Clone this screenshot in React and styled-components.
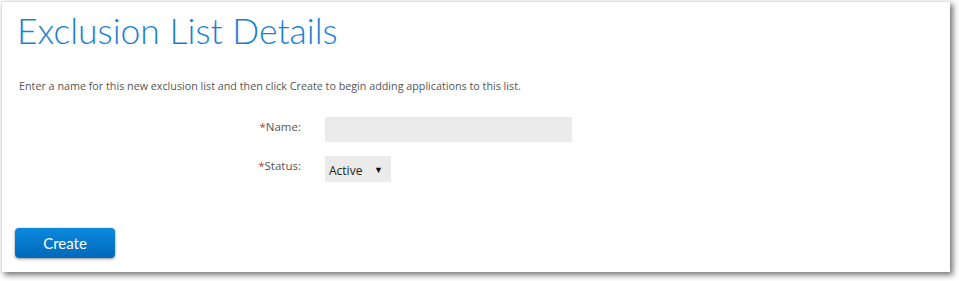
import React from "react";
import styled, { createGlobalStyle } from "styled-components";

const GlobalStyle = createGlobalStyle`
  html, body {
    margin: 0;
    padding: 0;
    background: #ffffff;
  }
  body {
    width: 959px;
    height: 281px;
    overflow: hidden;
  }
`;

const Frame = styled.div`
  padding: 1px 0 0 1px;
  width: 959px;
  height: 281px;
  box-sizing: border-box;
`;

const Panel = styled.div`
  width: 949px;
  height: 271px;
  box-sizing: border-box;
  background: #fff;
  border-top: 1px solid #e2e2e2;
  border-left: 1px solid #e2e2e2;
  box-shadow: 3px 3px 6px rgba(0, 0, 0, 0.55);
  padding: 6px 0 0 15px;
  display: flex;
  flex-direction: column;
`;

const Title = styled.h1`
  margin: 0;
  font-family: Lato, "Liberation Sans", sans-serif;
  font-weight: 300;
  font-size: 35.5px;
  line-height: 46px;
  color: #1a7fd2;
`;

const Intro = styled.p`
  margin: 24px 0 0 2px;
  font-family: "Open Sans", "Liberation Sans", sans-serif;
  font-size: 10.75px;
  line-height: 16px;
  color: #555;
`;

const Form = styled.div`
  margin: 23px 0 0 0;
  display: grid;
  grid-template-columns: 284px 248px;
  column-gap: 24px;
  row-gap: 14px;
  align-items: start;
`;

const Label = styled.label`
  text-align: right;
  font-family: "Open Sans", "Liberation Sans", sans-serif;
  font-size: 11.5px;
  line-height: 16px;
  color: #555;
  padding-top: ${(p) => p.$top || 0}px;

  span {
    color: #c0392b;
  }
`;

const TextInput = styled.input`
  width: 247px;
  height: 25px;
  box-sizing: border-box;
  border: none;
  background: #ebebeb;
  outline: none;
  padding: 0 6px;
`;

const SelectBox = styled.div`
  width: 66px;
  height: 26px;
  box-sizing: border-box;
  background: #ebebeb;
  display: flex;
  align-items: center;
  justify-content: space-between;
  padding: 2px 8px 0 4px;
  font-family: "Open Sans", "Liberation Sans", sans-serif;
  font-size: 12px;
  color: #222;
`;

const Caret = styled.span`
  font-size: 9px;
  color: #111;
  margin-top: -2px;
`;

const Footer = styled.div`
  margin-top: 46px;
  margin-left: -2px;
`;

const Button = styled.button`
  width: 100px;
  height: 30px;
  border: none;
  border-radius: 4px;
  background: linear-gradient(#0b89de, #0068ba);
  box-shadow: 0 1px 3px rgba(0, 0, 0, 0.45);
  color: #fff;
  font-family: Lato, "Liberation Sans", sans-serif;
  font-size: 15px;
  padding: 0;
`;

export default function App() {
  return (
    <Frame>
      <GlobalStyle />
      <Panel>
        <Title>Exclusion List Details</Title>
        <Intro>
          Enter a name for this new exclusion list and then click Create to begin adding
          applications to this list.
        </Intro>
        <Form>
          <Label $top={2}>
            <span>*</span>Name:
          </Label>
          <TextInput type="text" />
          <Label $top={2}>
            <span>*</span>Status:
          </Label>
          <SelectBox>
            Active <Caret>▼</Caret>
          </SelectBox>
        </Form>
        <Footer>
          <Button>Create</Button>
        </Footer>
      </Panel>
    </Frame>
  );
}
